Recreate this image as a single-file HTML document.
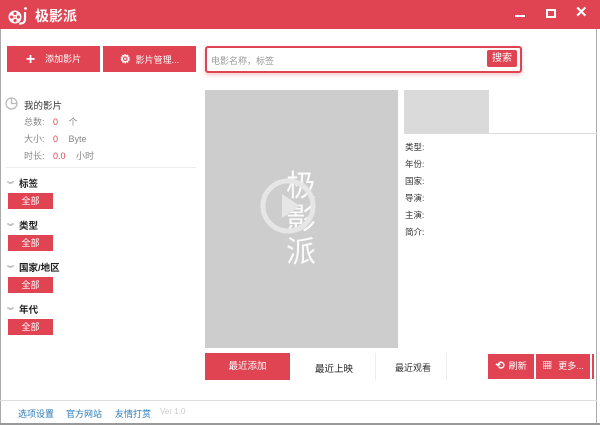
<!DOCTYPE html><html><head><meta charset="utf-8"><style>
*{margin:0;padding:0;box-sizing:border-box}
body{width:600px;height:425px;overflow:hidden;background:#fff;font-family:"Liberation Sans","Noto Sans CJK SC",sans-serif;font-size:9px;color:#333;position:relative}
.a{position:absolute}
.red{background:#e04352;color:#fff}
.btn{position:absolute;background:#e04352;color:#fff;font-size:9px;text-align:center}
.all{position:absolute;left:8px;width:45px;height:16px;background:#e04352;color:#fff;font-size:9px;text-align:center;line-height:16px}
.h{position:absolute;left:7px;font-size:9.5px;font-weight:bold;color:#222}
.h span{font-weight:normal;color:#777;font-size:7px;margin-right:5px}
.lab{position:absolute;left:405px;font-size:8.5px;color:#333}
</style></head><body>
<div class="a red" style="left:0;top:0;width:600px;height:29px"></div>
<svg class="a" style="left:6px;top:4px" width="26" height="22" viewBox="0 0 26 22">
<circle cx="9" cy="13" r="6.5" fill="#fff"/>
<g fill="#e04352"><circle cx="9" cy="9.5" r="1.6"/><circle cx="9" cy="16.5" r="1.6"/><circle cx="5.6" cy="13" r="1.6"/><circle cx="12.4" cy="13" r="1.6"/><circle cx="9" cy="13" r=".8"/></g>
<path d="M19 8 V15 Q19 20 13 19.5" stroke="#fff" stroke-width="2.2" fill="none"/><circle cx="19.5" cy="4.5" r="1.4" fill="#fff"/>
</svg>
<div class="a" style="left:35px;top:6px;color:#fff;font-size:14px;font-weight:bold">极影派</div>
<div class="a" style="left:515px;top:15px;width:10px;height:2px;background:#fff"></div>
<div class="a" style="left:546px;top:9px;width:10px;height:9px;border:2px solid #fff"></div>
<div class="a" style="left:575px;top:3px;color:#fff;font-size:15px;font-weight:bold">✕</div>
<div class="a" style="left:596px;top:29px;width:1px;height:396px;background:#aaa"></div>
<div class="a" style="left:0;top:29px;width:1px;height:396px;background:#aaa"></div>
<div class="a" style="left:0;top:423px;width:600px;height:2px;background:#999"></div>

<div class="btn" style="left:7px;top:46px;width:93px;height:26px;line-height:26px"><b style="font-size:16px;vertical-align:-2px;margin-right:10px">+</b>添加影片</div>
<div class="btn" style="left:103px;top:46px;width:93px;height:26px;line-height:26px"><b style="font-size:12px;margin-right:5px">⚙</b>影片管理...</div>
<div class="a" style="left:205px;top:46px;width:317px;height:27px;border:2px solid #e04352;border-radius:3px;box-shadow:0 2px 4px rgba(224,67,82,.3)"></div>
<div class="a" style="left:211px;top:54px;color:#999;font-size:9px">电影名称，标签</div>
<div class="a" style="left:487px;top:50px;width:30px;height:17px;background:#e04352;color:#fff;border-radius:2px;text-align:center;line-height:17px;font-size:10px">搜索</div>

<svg class="a" style="left:5px;top:97px" width="13" height="13"><circle cx="6.5" cy="6.5" r="5.5" fill="none" stroke="#bbb" stroke-width="1.3"/><path d="M6.5 1 V6.5 H12" fill="none" stroke="#bbb" stroke-width="1.3"/></svg>
<div class="a" style="left:24px;top:98px;font-size:9.5px;color:#333">我的影片</div>
<div class="a" style="left:24px;top:115px;color:#888">总数: <span style="color:#e04352;margin:0 8px 0 6px">0</span> 个</div>
<div class="a" style="left:24px;top:132px;color:#888">大小: <span style="color:#e04352;margin:0 8px 0 6px">0</span> Byte</div>
<div class="a" style="left:24px;top:149px;color:#888">时长: <span style="color:#e04352;margin:0 8px 0 6px">0.0</span> 小时</div>
<div class="a" style="left:6px;top:167px;width:190px;height:1px;background:#eee"></div>
<div class="h" style="top:176px"><span>︾</span>标签</div><div class="all" style="top:193px">全部</div>
<div class="h" style="top:218px"><span>︾</span>类型</div><div class="all" style="top:235px">全部</div>
<div class="h" style="top:260px"><span>︾</span>国家/地区</div><div class="all" style="top:277px">全部</div>
<div class="h" style="top:302px"><span>︾</span>年代</div><div class="all" style="top:319px">全部</div>

<div class="a" style="left:205px;top:90px;width:193px;height:258px;background:#cdcdcd"></div>
<div class="a" style="left:281px;top:170px;color:#fff;font-size:30px;line-height:33px;width:40px;text-align:center;opacity:.9">极<br>影<br>派</div>
<svg class="a" style="left:259px;top:177px" width="58" height="58"><circle cx="29" cy="29" r="25" fill="none" stroke="#e6e6e6" stroke-width="5"/><path d="M23 17 L41 29 L23 41 Z" fill="#e6e6e6"/></svg>
<div class="a" style="left:404px;top:90px;width:85px;height:43px;background:#dadada"></div>
<div class="a" style="left:404px;top:133px;width:193px;height:1px;background:#ddd"></div>
<div class="lab" style="top:141px">类型:</div><div class="lab" style="top:158px">年份:</div><div class="lab" style="top:175px">国家:</div><div class="lab" style="top:192px">导演:</div><div class="lab" style="top:209px">主演:</div><div class="lab" style="top:226px">简介:</div>

<div class="btn" style="left:205px;top:353px;width:85px;height:27px;line-height:27px;font-size:9.5px">最近添加</div>
<div class="a" style="left:244px;top:376px;border:4px solid transparent;border-bottom-color:#fff"></div>
<div class="a" style="left:315px;top:361px;font-size:9.5px;color:#222">最近上映</div>
<div class="a" style="left:375px;top:353px;width:1px;height:27px;background:#eee"></div>
<div class="a" style="left:395px;top:361px;font-size:9px;color:#333">最近观看</div>
<div class="a" style="left:446px;top:353px;width:1px;height:27px;background:#eee"></div>
<div class="btn" style="left:488px;top:354px;width:46px;height:25px;line-height:25px"><b style="font-size:11px;margin-right:4px">⟲</b>刷新</div>
<div class="btn" style="left:536px;top:354px;width:54px;height:25px;line-height:25px"><b style="font-size:10px;margin-right:6px">▦</b>更多...</div>
<div class="a" style="left:592px;top:354px;width:2px;height:25px;background:#e04352"></div>
<div class="a" style="left:0;top:400px;width:597px;height:1px;background:#ddd"></div>
<div class="a" style="left:18px;top:407px;color:#2a7ab8;font-size:9px">选项设置</div>
<div class="a" style="left:66px;top:407px;color:#2a7ab8;font-size:9px">官方网站</div>
<div class="a" style="left:115px;top:407px;color:#2a7ab8;font-size:9px">友情打赏</div>
<div class="a" style="left:160px;top:407px;color:#ccc;font-size:8px">Ver 1.0</div>
</body></html>
